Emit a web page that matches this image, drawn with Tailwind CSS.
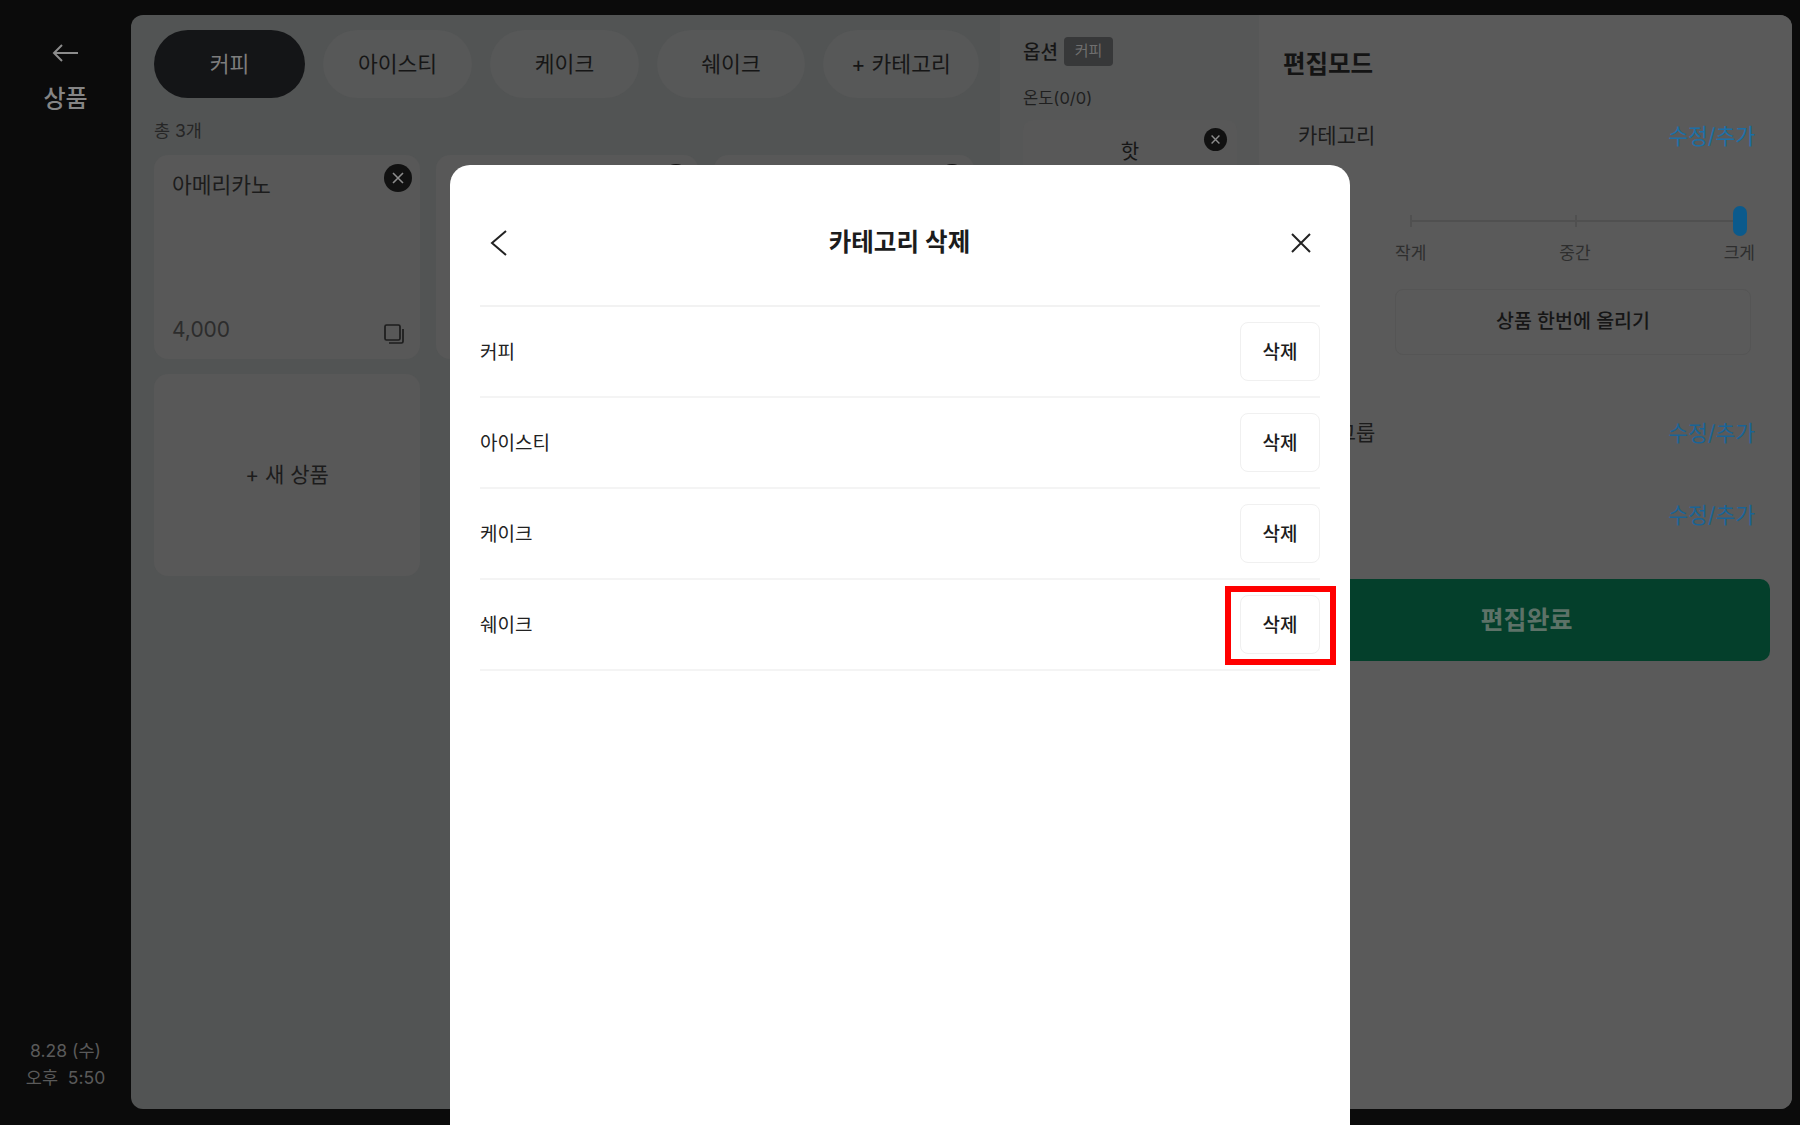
<!DOCTYPE html>
<html lang="ko">

<head>
    <meta charset="UTF-8">
    <meta name="viewport" content="width=device-width, initial-scale=1.0">
    <title>카테고리 삭제</title>
    <script src="https://cdn.jsdelivr.net/npm/@tailwindcss/browser@4"></script>
</head>

<body class="bg-[#0b0b0b] font-['Inter','Noto_Sans_CJK_KR',sans-serif] overflow-hidden">
    <div class="relative w-[1800px] h-[1125px] flex pt-[15px] pb-[16px] pr-[8px] overflow-hidden">

        <!-- sidebar -->
        <aside class="w-[131px] shrink-0 flex flex-col justify-between items-center pt-[28px] pb-[18px]">
            <div class="flex flex-col items-center">
                <svg class="w-[28px] h-[20px] text-[#8c8c8c]" viewBox="0 0 28 20" fill="none" stroke="currentColor" stroke-width="2">
                    <path d="M27 10H3M11 2l-8 8 8 8" />
                </svg>
                <span class="mt-[20px] text-[24px] leading-[32px] font-medium text-[#858585]">상품</span>
            </div>
            <div class="flex flex-col items-center text-[17.5px] leading-[27px] text-[#5a5a5a]">
                <span>8.28 (수)</span>
                <span class="whitespace-pre">오후  5:50</span>
            </div>
        </aside>

        <!-- main panel -->
        <main class="flex-1 flex rounded-[12px] overflow-hidden bg-[#525454]">
            <section class="w-[869px] shrink-0 pt-[15px] pl-[23px]">
                <div class="flex gap-[18px] text-[21.5px] text-[#161616]">
                    <div class="w-[151px] h-[68px] rounded-full bg-[#141517] text-[#7d7d7d] flex items-center justify-center">커피</div>
                    <div class="w-[149px] h-[68px] rounded-full bg-[#575858] flex items-center justify-center">아이스티</div>
                    <div class="w-[149px] h-[68px] rounded-full bg-[#575858] flex items-center justify-center">케이크</div>
                    <div class="w-[148px] h-[68px] rounded-full bg-[#575858] flex items-center justify-center">쉐이크</div>
                    <div class="w-[156px] h-[68px] rounded-full bg-[#575858] flex items-center justify-center">+ 카테고리</div>
                </div>
                <p class="mt-[22px] h-[22px] leading-[22px] text-[17.5px] text-[#262626]">총 3개</p>
                <div class="mt-[13px] grid grid-cols-[266px_262px_260px] gap-x-[16px] gap-y-[15px]">
                    <div class="relative h-[204px] rounded-[14px] bg-[#585858] px-[18px] pt-[16px] pb-[14px] flex flex-col justify-between">
                        <span class="text-[21.5px] leading-[28px] text-[#1c1c1c]">아메리카노</span>
                        <span class="text-[21px] leading-[30px] text-[#2c2c2c]">4,000</span>
                        <div class="absolute top-[9px] right-[8px] w-[28px] h-[28px] rounded-full bg-[#111] flex items-center justify-center">
                            <svg class="w-[14px] h-[14px] text-[#8c8c8c]" viewBox="0 0 14 14" fill="none" stroke="currentColor" stroke-width="1.6"><path d="M2 2l10 10M12 2L2 12" /></svg>
                        </div>
                        <svg class="absolute right-[16px] bottom-[15px] w-[20px] h-[20px] text-[#1c1c1c]" viewBox="0 0 20 20" fill="none" stroke="currentColor" stroke-width="1.7">
                            <rect x="1" y="1" width="15" height="15" rx="1.5" />
                            <path d="M19 5v12.5a1.5 1.5 0 0 1-1.5 1.5H5" />
                        </svg>
                    </div>
                    <div class="relative h-[204px] rounded-[14px] bg-[#585858]">
                        <div class="absolute top-[9px] right-[8px] w-[28px] h-[28px] rounded-full bg-[#111]"></div>
                    </div>
                    <div class="relative h-[204px] rounded-[14px] bg-[#585858]">
                        <div class="absolute top-[9px] right-[8px] w-[28px] h-[28px] rounded-full bg-[#111]"></div>
                    </div>
                    <div class="h-[202px] rounded-[14px] bg-[#585858] flex items-center justify-center text-[21px] text-[#1c1c1c]">+ 새 상품</div>
                </div>
            </section>

            <section class="w-[259px] shrink-0 bg-[#565757] pt-[24px] pl-[23px] pr-[22px]">
                <div class="flex items-center h-[29px] gap-[6px]">
                    <span class="text-[19px] font-medium text-[#161616]">옵션</span>
                    <span class="w-[49px] h-[29px] -mt-[4px] rounded-[4px] bg-[#373839] text-[15px] text-[#6f6f6f] flex items-center justify-center">커피</span>
                </div>
                <p class="mt-[18px] h-[24px] leading-[24px] text-[16.5px] text-[#1f1f1f]">온도(0/0)</p>
                <div class="relative mt-[10px] h-[120px] rounded-[10px] bg-[#585858] pt-[17px] text-center text-[20px] leading-[30px] text-[#161616]">
                    핫
                    <div class="absolute top-[8px] right-[10px] w-[23px] h-[23px] rounded-full bg-[#111] flex items-center justify-center">
                        <svg class="w-[11px] h-[11px] text-[#8c8c8c]" viewBox="0 0 14 14" fill="none" stroke="currentColor" stroke-width="1.8"><path d="M2 2l10 10M12 2L2 12" /></svg>
                    </div>
                </div>
            </section>

            <section class="flex-1 bg-[#5a5a5a] pt-[33px] pl-[24px] pr-[22px]">
                <h2 class="h-[32px] leading-[32px] text-[24.5px] font-semibold text-[#141414]">편집모드</h2>
                <div class="mt-[26px] h-[60px] px-[15px] flex items-center justify-between">
                    <span class="text-[21px] text-[#1c1c1c]">카테고리</span>
                    <span class="text-[21.5px] text-[#1c6fa6]">수정/추가</span>
                </div>
                <div class="mt-[20px] h-[184px] pl-[112px] pr-[15px] pt-[20px]">
                    <div class="relative h-[30px] mx-[15px]">
                        <div class="absolute left-0 right-0 top-[14px] h-[2px] bg-[#505050]"></div>
                        <div class="absolute left-0 top-[9px] w-[2px] h-[12px] bg-[#505050]"></div>
                        <div class="absolute left-1/2 top-[9px] w-[2px] h-[12px] bg-[#505050]"></div>
                        <div class="absolute right-[-7px] top-0 w-[14px] h-[30px] rounded-full bg-[#0b5a8c]"></div>
                    </div>
                    <div class="mt-[5px] h-[24px] flex justify-between text-[17px] leading-[24px] text-[#2e2e2e]">
                        <span>작게</span>
                        <span>중간</span>
                        <span>크게</span>
                    </div>
                    <div class="mt-[24px] w-[356px] h-[66px] rounded-[8px] border border-[#555] flex items-center justify-center text-[19.5px] font-medium text-[#161616]">상품 한번에 올리기</div>
                </div>
                <div class="mt-[33px] h-[60px] px-[15px] flex items-center justify-between">
                    <span class="text-[21px] text-[#1c1c1c]">옵션그룹</span>
                    <span class="text-[21.5px] text-[#1a6496]">수정/추가</span>
                </div>
                <div class="mt-[22px] h-[60px] px-[15px] flex items-center justify-end">
                    <span class="text-[21.5px] text-[#1a6496]">수정/추가</span>
                </div>
                <div class="mt-[34px] h-[82px] pt-[2px] rounded-[10px] bg-[#043f2b] flex items-center justify-center text-[25px] font-semibold text-[#5d7268]">편집완료</div>
            </section>
        </main>

        <!-- modal -->
        <div class="absolute left-[450px] top-[165px] bottom-0 w-[900px] rounded-t-[20px] bg-white px-[30px]">
            <div class="h-[142px] pt-[15px] border-b-2 border-[#f2f2f2] flex items-center">
                <svg class="ml-[10px] w-[18px] h-[26px] text-[#222]" viewBox="0 0 18 26" fill="none" stroke="currentColor" stroke-width="2">
                    <path d="M16 1L2 13l14 12" />
                </svg>
                <h1 class="flex-1 text-center text-[24.5px] font-semibold text-[#1c1c1c]">카테고리 삭제</h1>
                <svg class="mr-[9px] w-[20px] h-[20px] text-[#222]" viewBox="0 0 20 20" fill="none" stroke="currentColor" stroke-width="2">
                    <path d="M1 1l18 18M19 1L1 19" />
                </svg>
            </div>
            <div class="h-[91px] border-b-2 border-[#f4f4f4] flex items-center justify-between text-[19px] text-[#222]">
                <span class="pt-[3px]">커피</span>
                <button class="w-[80px] h-[59px] pt-[3px] rounded-[8px] border border-[#f0f0f0] font-medium text-[#1c1c1c]">삭제</button>
            </div>
            <div class="h-[91px] border-b-2 border-[#f4f4f4] flex items-center justify-between text-[19px] text-[#222]">
                <span class="pt-[3px]">아이스티</span>
                <button class="w-[80px] h-[59px] pt-[3px] rounded-[8px] border border-[#f0f0f0] font-medium text-[#1c1c1c]">삭제</button>
            </div>
            <div class="h-[91px] border-b-2 border-[#f4f4f4] flex items-center justify-between text-[19px] text-[#222]">
                <span class="pt-[3px]">케이크</span>
                <button class="w-[80px] h-[59px] pt-[3px] rounded-[8px] border border-[#f0f0f0] font-medium text-[#1c1c1c]">삭제</button>
            </div>
            <div class="h-[91px] border-b-2 border-[#f4f4f4] flex items-center justify-between text-[19px] text-[#222]">
                <span class="pt-[3px]">쉐이크</span>
                <button class="relative w-[80px] h-[59px] pt-[3px] rounded-[8px] border border-[#f0f0f0] font-medium text-[#1c1c1c]">
                    삭제
                    <span class="absolute left-[-16px] right-[-17px] top-[-10px] bottom-[-12px] border-[6px] border-[#ff0000]"></span>
                </button>
            </div>
        </div>
    </div>
</body>

</html>
